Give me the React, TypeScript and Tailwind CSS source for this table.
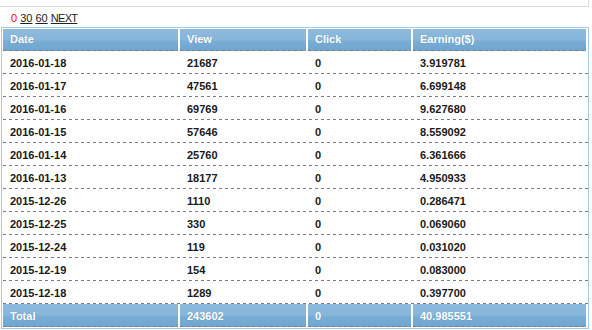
import React from "react";

const rows: [string, string, string, string][] = [
  ["2016-01-18", "21687", "0", "3.919781"],
  ["2016-01-17", "47561", "0", "6.699148"],
  ["2016-01-16", "69769", "0", "9.627680"],
  ["2016-01-15", "57646", "0", "8.559092"],
  ["2016-01-14", "25760", "0", "6.361666"],
  ["2016-01-13", "18177", "0", "4.950933"],
  ["2015-12-26", "1110", "0", "0.286471"],
  ["2015-12-25", "330", "0", "0.069060"],
  ["2015-12-24", "119", "0", "0.031020"],
  ["2015-12-19", "154", "0", "0.083000"],
  ["2015-12-18", "1289", "0", "0.397700"],
];

const grid = "grid grid-cols-[175px_126px_103px_173px] gap-x-[2px]";

const blueCell =
  "pl-[7px] text-white [text-shadow:0_0_1px_rgba(40,80,120,0.35)] [background:linear-gradient(to_right,#7c7c7c_50%,transparent_50%)_left_bottom/6px_1px_repeat-x,linear-gradient(to_bottom,#8dbadd_0%,#87b6da_48%,#79add5_56%,#6ea5cf_100%)]";

function HeadCell({ children }: { children: React.ReactNode }) {
  return <div className={`h-[22px] leading-[21px] ${blueCell}`}>{children}</div>;
}

function TotalCell({ children }: { children: React.ReactNode }) {
  return <div className={`h-[23px] pt-[3px] leading-[19px] ${blueCell}`}>{children}</div>;
}

export default function App() {
  return (
    <div className="w-[592px] h-[330px] bg-white font-['Liberation_Sans',Arial,sans-serif] overflow-hidden">
      <div className="w-[589px] h-[7px] border-b border-r border-[#dcdcdc]" />
      <div className="h-[20px] pl-[11px] pt-[5px] text-[11px] leading-[12px] text-[#222]">
        <span className="text-[#ff0000]">0</span>{" "}
        <span className="underline">30</span>{" "}
        <span className="underline">60</span>{" "}
        <span className="underline tracking-[-0.7px]">NEXT</span>
      </div>
      <div className="ml-[1px] w-[588px] border border-[#a4c9e5] pt-[1px] pb-[1px] pl-[1px] text-[11px] font-bold">
        <div className={grid}>
          <HeadCell>Date</HeadCell>
          <HeadCell>View</HeadCell>
          <HeadCell>Click</HeadCell>
          <HeadCell>Earning($)</HeadCell>
        </div>
        {rows.map((r) => (
          <div
            key={r[0]}
            className={`${grid} h-[23px] text-[#1a1a1a] [background:linear-gradient(to_right,#7c7c7c_50%,transparent_50%)_left_bottom/6px_1px_repeat-x]`}
          >
            {r.map((c, i) => (
              <div key={i} className="pl-[7px] pt-[3px] leading-[19px]">
                {c}
              </div>
            ))}
          </div>
        ))}
        <div className={grid}>
          <TotalCell>Total</TotalCell>
          <TotalCell>243602</TotalCell>
          <TotalCell>0</TotalCell>
          <TotalCell>40.985551</TotalCell>
        </div>
      </div>
    </div>
  );
}
